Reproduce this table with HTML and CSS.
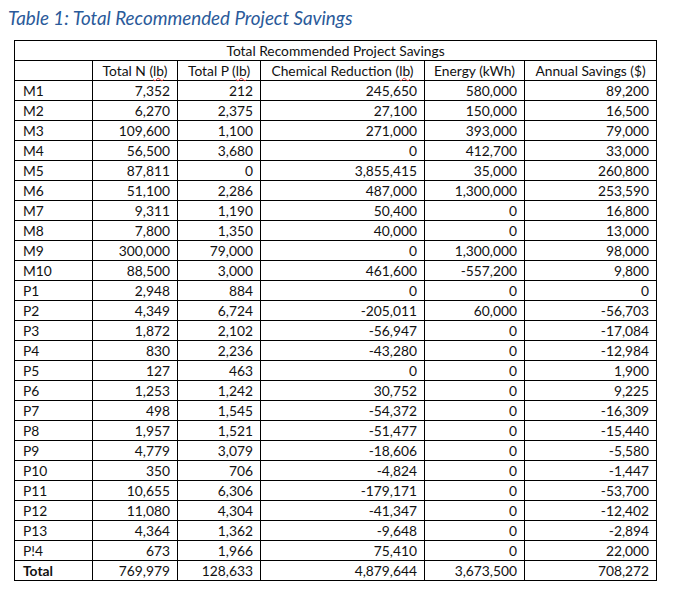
FILE: index.html
```html
<!DOCTYPE html>
<html>
<head>
<meta charset="utf-8">
<link rel="stylesheet" href="styles.css">
</head>
<body>
<div class="page">
<h1 class="caption">Table 1: Total Recommended Project Savings</h1>
<table class="savings">
<colgroup>
<col class="c-label"><col class="c-n"><col class="c-p"><col class="c-chem"><col class="c-energy"><col class="c-annual">
</colgroup>
<thead>
<tr><th colspan="6" class="group">Total Recommended Project Savings</th></tr>
<tr><th></th><th>Total N (<span class="sp">lb</span>)</th><th>Total P (<span class="sp">lb</span>)</th><th>Chemical Reduction (<span class="sp">lb</span>)</th><th>Energy (kWh)</th><th>Annual Savings ($)</th></tr>
</thead>
<tbody>
<tr><td>M1</td><td>7,352</td><td>212</td><td>245,650</td><td>580,000</td><td>89,200</td></tr>
<tr><td>M2</td><td>6,270</td><td>2,375</td><td>27,100</td><td>150,000</td><td>16,500</td></tr>
<tr><td>M3</td><td>109,600</td><td>1,100</td><td>271,000</td><td>393,000</td><td>79,000</td></tr>
<tr><td>M4</td><td>56,500</td><td>3,680</td><td>0</td><td>412,700</td><td>33,000</td></tr>
<tr><td>M5</td><td>87,811</td><td>0</td><td>3,855,415</td><td>35,000</td><td>260,800</td></tr>
<tr><td>M6</td><td>51,100</td><td>2,286</td><td>487,000</td><td>1,300,000</td><td>253,590</td></tr>
<tr><td>M7</td><td>9,311</td><td>1,190</td><td>50,400</td><td>0</td><td>16,800</td></tr>
<tr><td>M8</td><td>7,800</td><td>1,350</td><td>40,000</td><td>0</td><td>13,000</td></tr>
<tr><td>M9</td><td>300,000</td><td>79,000</td><td>0</td><td>1,300,000</td><td>98,000</td></tr>
<tr><td>M10</td><td>88,500</td><td>3,000</td><td>461,600</td><td>-557,200</td><td>9,800</td></tr>
<tr><td>P1</td><td>2,948</td><td>884</td><td>0</td><td>0</td><td>0</td></tr>
<tr><td>P2</td><td>4,349</td><td>6,724</td><td>-205,011</td><td>60,000</td><td>-56,703</td></tr>
<tr><td>P3</td><td>1,872</td><td>2,102</td><td>-56,947</td><td>0</td><td>-17,084</td></tr>
<tr><td>P4</td><td>830</td><td>2,236</td><td>-43,280</td><td>0</td><td>-12,984</td></tr>
<tr><td>P5</td><td>127</td><td>463</td><td>0</td><td>0</td><td>1,900</td></tr>
<tr><td>P6</td><td>1,253</td><td>1,242</td><td>30,752</td><td>0</td><td>9,225</td></tr>
<tr><td>P7</td><td>498</td><td>1,545</td><td>-54,372</td><td>0</td><td>-16,309</td></tr>
<tr><td>P8</td><td>1,957</td><td>1,521</td><td>-51,477</td><td>0</td><td>-15,440</td></tr>
<tr><td>P9</td><td>4,779</td><td>3,079</td><td>-18,606</td><td>0</td><td>-5,580</td></tr>
<tr><td>P10</td><td>350</td><td>706</td><td>-4,824</td><td>0</td><td>-1,447</td></tr>
<tr><td>P11</td><td>10,655</td><td>6,306</td><td>-179,171</td><td>0</td><td>-53,700</td></tr>
<tr><td>P12</td><td>11,080</td><td>4,304</td><td>-41,347</td><td>0</td><td>-12,402</td></tr>
<tr><td>P13</td><td>4,364</td><td>1,362</td><td>-9,648</td><td>0</td><td>-2,894</td></tr>
<tr><td>P!4</td><td>673</td><td>1,966</td><td>75,410</td><td>0</td><td>22,000</td></tr>
<tr class="total"><td>Total</td><td>769,979</td><td>128,633</td><td>4,879,644</td><td>3,673,500</td><td>708,272</td></tr>
</tbody>
</table>
</div>
</body>
</html>
```
FILE: styles.css
```css
html, body {
  margin: 0;
  padding: 0;
  background: #ffffff;
}
.page {
  padding: 6px 0 0 8px;
  font-family: Lato, "Open Sans", sans-serif;
  color: #000;
}
.caption {
  margin: 0 0 10px 0;
  font-family: Lato, "Open Sans", sans-serif;
  font-style: italic;
  font-weight: normal;
  font-size: 18.8px;
  line-height: 24px;
  color: #2a5a9a;
}
.savings {
  margin-left: 6px;
  border-collapse: collapse;
  table-layout: fixed;
  width: 643px;
  font-size: 13.8px;
  color: #111;
}
.c-label { width: 78px; }
.c-n { width: 85px; }
.c-p { width: 83px; }
.c-chem { width: 164px; }
.c-energy { width: 100px; }
.c-annual { width: 132px; }
.savings th,
.savings td {
  border: 1px solid #000;
  height: 19px;
  padding: 0 7px;
  line-height: 19px;
  white-space: nowrap;
}
.savings th {
  font-weight: normal;
  text-align: center;
}
.savings td {
  text-align: right;
}
.savings td:first-child {
  text-align: left;
  padding-left: 8px;
}
.savings .total td:first-child {
  font-weight: bold;
}
.sp {
  text-decoration-line: underline;
  text-decoration-style: wavy;
  text-decoration-color: #e03030;
  text-decoration-thickness: 1px;
  text-underline-offset: 1px;
}
```
